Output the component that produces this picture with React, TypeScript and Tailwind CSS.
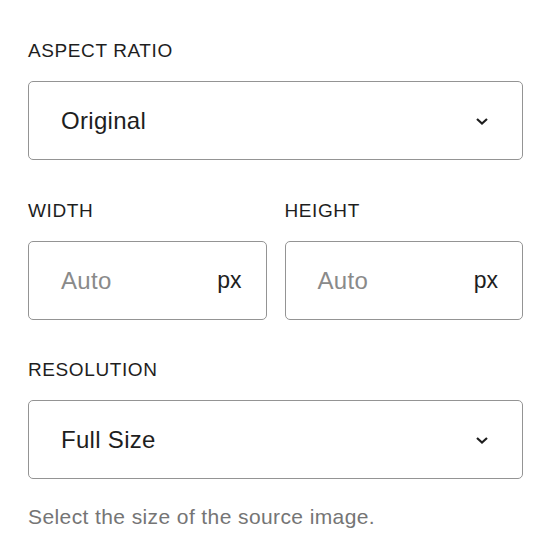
const font = { fontFamily: "'Liberation Sans', Arial, sans-serif" };

function Chevron() {
  return (
    <svg width="16" height="10" viewBox="0 0 16 10" fill="none" className="shrink-0">
      <path d="M3 3l5 4.5L13 3" stroke="#1e1e1e" strokeWidth="2.2" />
    </svg>
  );
}

function Label({ children }: { children: React.ReactNode }) {
  return (
    <div className="text-[19px] font-medium uppercase tracking-[0.6px] text-[#1e1e1e] leading-none mb-[21px]">
      {children}
    </div>
  );
}

function Select({ value }: { value: string }) {
  return (
    <div className="h-[79px] border-[1.5px] border-[#949494] rounded-[5px] flex items-center justify-between pl-[32px] pr-[32px]">
      <span className="text-[24px] tracking-[0.3px] text-[#1e1e1e]">{value}</span>
      <Chevron />
    </div>
  );
}

function Unit() {
  return (
    <div className="h-[79px] border-[1.5px] border-[#949494] rounded-[5px] flex items-center justify-between pl-[32px] pr-[24px]">
      <span className="text-[24px] tracking-[0.3px] text-[#8a8a8a]">Auto</span>
      <span className="text-[23px] text-[#1e1e1e]">px</span>
    </div>
  );
}

export default function App() {
  return (
    <div style={font} className="w-[554px] h-[558px] bg-white pl-[28px] pr-[31px] pt-[41px]">
      <Label>Aspect ratio</Label>
      <Select value="Original" />
      <div className="grid grid-cols-2 gap-[18px] mt-[41px]">
        <div>
          <Label>Width</Label>
          <Unit />
        </div>
        <div>
          <Label>Height</Label>
          <Unit />
        </div>
      </div>
      <div className="mt-[40px]">
        <Label>Resolution</Label>
        <Select value="Full Size" />
      </div>
      <p className="mt-[22px] text-[21px] tracking-[0.4px] text-[#757575]">Select the size of the source image.</p>
    </div>
  );
}
